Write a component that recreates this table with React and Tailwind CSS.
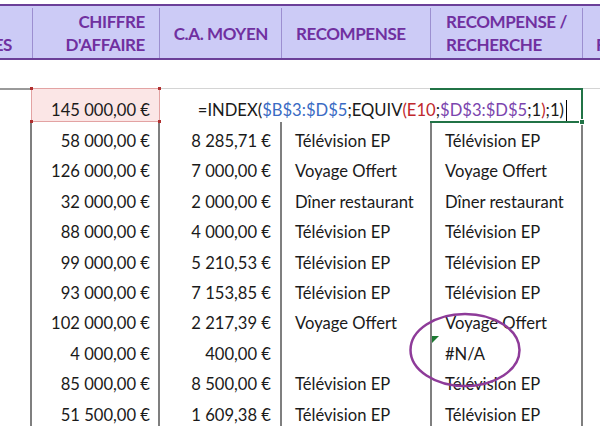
import React from "react";

const rows = [
  ["58 000,00 €", "8 285,71 €", "Télévision EP", "Télévision EP"],
  ["126 000,00 €", "7 000,00 €", "Voyage Offert", "Voyage Offert"],
  ["32 000,00 €", "2 000,00 €", "Dîner restaurant", "Dîner restaurant"],
  ["88 000,00 €", "4 000,00 €", "Télévision EP", "Télévision EP"],
  ["99 000,00 €", "5 210,53 €", "Télévision EP", "Télévision EP"],
  ["93 000,00 €", "7 153,85 €", "Télévision EP", "Télévision EP"],
  ["102 000,00 €", "2 217,39 €", "Voyage Offert", "Voyage Offert"],
  ["4 000,00 €", "400,00 €", "", "#N/A"],
  ["85 000,00 €", "8 500,00 €", "Télévision EP", "Télévision EP"],
  ["51 500,00 €", "1 609,38 €", "Télévision EP", "Télévision EP"],
];

export default function App() {
  return (
    <div className="relative w-[600px] h-[426px] overflow-hidden bg-white font-['Lato',sans-serif] text-[#1a1a1a]">
      {/* ─── HEADER ─── */}
      <div className="mt-[4px] h-[56px] flex border-y-2 border-[#6b3f98] bg-[#cccbf6] text-[#7030a0] font-bold text-[17px] tracking-[-0.4px] leading-[23px] pt-[2px]">
        <div className="w-[33px] shrink-0 border-r border-[#9c8fd0] overflow-hidden flex flex-col justify-center items-end pr-[20px]">
          <div className="invisible">X</div>
          <div className="whitespace-nowrap">VENTES</div>
        </div>
        <div className="w-[127px] shrink-0 border-r border-[#9c8fd0] flex flex-col justify-center items-end pr-[14px]">
          <div>CHIFFRE</div>
          <div>D'AFFAIRE</div>
        </div>
        <div className="w-[122px] shrink-0 border-r border-[#9c8fd0] flex items-center justify-end pr-[13px] whitespace-nowrap">
          C.A. MOYEN
        </div>
        <div className="w-[149px] shrink-0 border-r border-[#9c8fd0] flex items-center pl-[14px]">
          RECOMPENSE
        </div>
        <div className="w-[152px] shrink-0 border-r border-[#9c8fd0] flex flex-col justify-center pl-[15px] whitespace-nowrap">
          <div>RECOMPENSE /</div>
          <div>RECHERCHE</div>
        </div>
        <div className="flex-1 flex flex-col justify-center pl-[13px] whitespace-nowrap">
          <div className="invisible">X</div>
          <div>R</div>
        </div>
      </div>

      {/* ─── BLANK ROW ─── */}
      <div className="h-[28px]" />

      {/* ─── EDITED ROW ─── */}
      <div className="h-[34px] flex text-[16.6px] leading-[20px]">
        <div className="w-[31px] shrink-0 border-t-2 border-[#9a9a9a]" />
        <div className="relative w-[129px] shrink-0 border border-[#e3a3a3] bg-[#fbe6e6] flex items-start justify-end pt-[11px] pr-[9px] whitespace-nowrap">
          145 000,00 €
          <span className="absolute -left-[2px] -top-[2px] w-[3px] h-[3px] bg-[#b03030]" />
          <span className="absolute -right-[2px] -top-[2px] w-[3px] h-[3px] bg-[#b03030]" />
          <span className="absolute -left-[2px] -bottom-[2px] w-[3px] h-[3px] bg-[#b03030]" />
          <span className="absolute -right-[2px] -bottom-[2px] w-[3px] h-[3px] bg-[#b03030]" />
        </div>
        <div className="w-[422px] shrink-0 border-t border-[#d4d4d4] flex items-start justify-end pt-[11px] pr-[15px] whitespace-nowrap">
          <span>=INDEX(</span>
          <span className="text-[#3a6bc4]">$B$3:$D$5</span>
          <span>;EQUIV</span>
          <span className="text-[#c0282d]">(E10</span>
          <span>;</span>
          <span className="text-[#7b45ae]">$D$3:$D$5</span>
          <span>;1</span>
          <span className="text-[#c0282d]">)</span>
          <span>;1)</span>
          <span className="ml-[2px] w-px h-[21px] bg-black" />
        </div>
        <div className="flex-1 border-t border-[#d4d4d4]" />
      </div>

      {/* active cell selection */}
      <div className="absolute left-[430px] top-[88px] w-[153px] h-[35px] border-2 border-l-0 border-[#217346] pointer-events-none">
        <span className="absolute -right-[4px] -bottom-[4px] w-[6px] h-[6px] bg-[#217346] border border-white" />
      </div>

      {/* ─── DATA ROWS ─── */}
      {rows.map((r, i) => (
        <div key={i} className="h-[30.4px] flex text-[16.6px] leading-[20px] whitespace-nowrap">
          <div className="w-[32px] shrink-0 border-r-2 border-[#7f7f7f]" />
          <div className="w-[128px] shrink-0 border-r-2 border-[#7f7f7f] flex justify-end pt-[9px] pr-[8px]">{r[0]}</div>
          <div className="w-[122px] shrink-0 border-r-2 border-[#7f7f7f] flex justify-end pt-[9px] pr-[9px]">{r[1]}</div>
          <div className="w-[150px] shrink-0 border-r-2 border-[#7f7f7f] pt-[9px] pl-[13px]">{r[2]}</div>
          <div className="w-[151px] shrink-0 border-r-2 border-[#7f7f7f] pt-[9px] pl-[13px]">{r[3]}</div>
          <div className="flex-1" />
        </div>
      ))}

      {/* error indicator */}
      <svg className="absolute left-[432px] top-[336px]" width="7" height="7" viewBox="0 0 7 7">
        <polygon points="0,0 7,0 0,7" fill="#1d7a33" />
      </svg>

      {/* annotation circle */}
      <svg className="absolute left-[408px] top-[311px] pointer-events-none" width="114" height="78" viewBox="0 0 114 78">
        <ellipse cx="57" cy="39" rx="54.5" ry="36" fill="none" stroke="#8e3b99" strokeWidth="2.5" />
      </svg>
    </div>
  );
}
